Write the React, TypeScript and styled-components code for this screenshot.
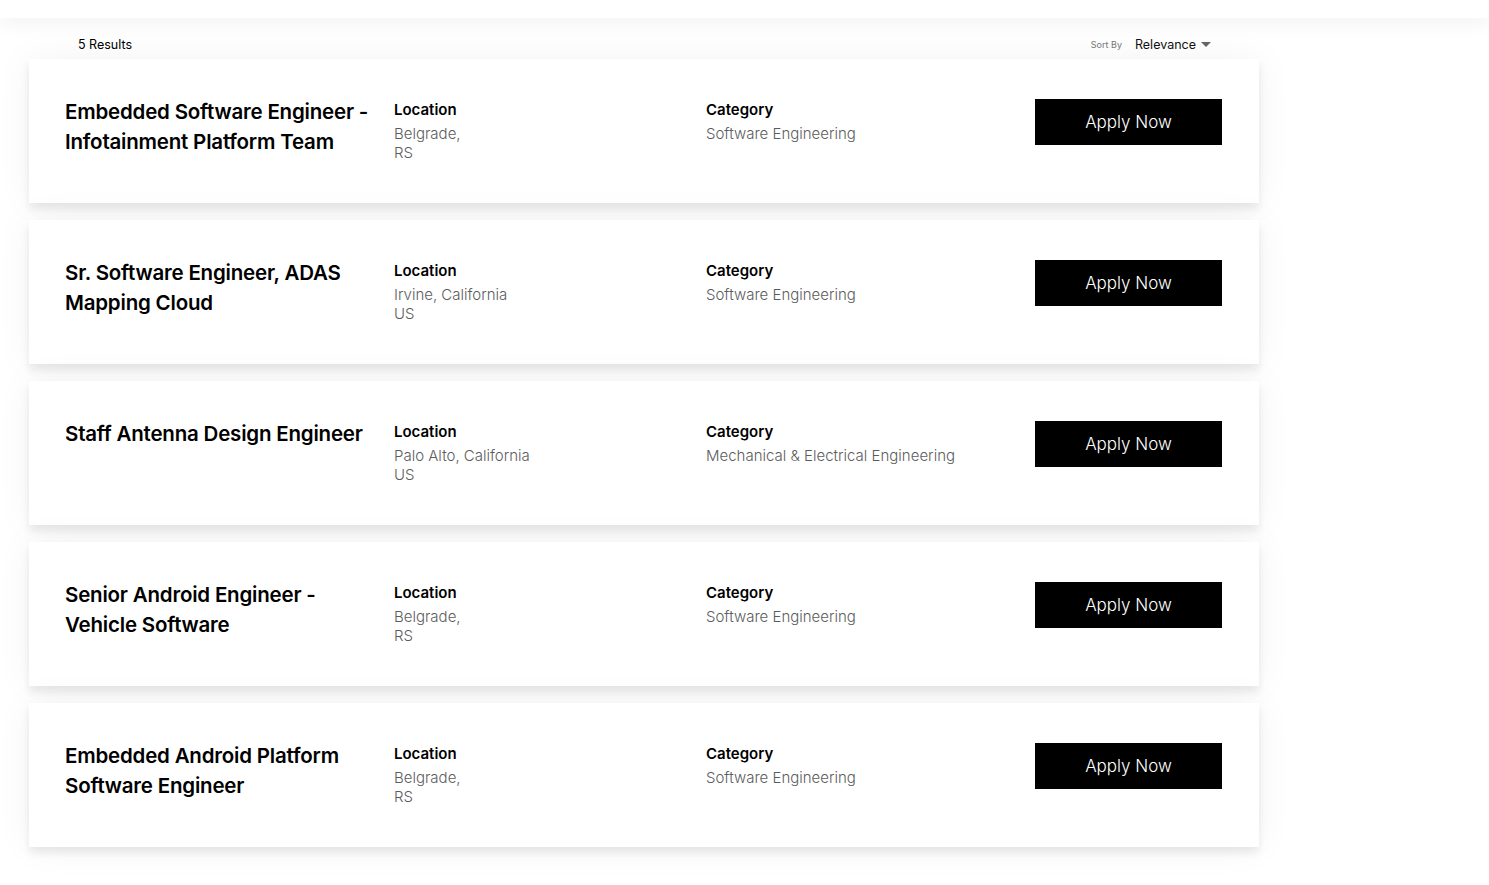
import React from 'react';
import styled, { createGlobalStyle } from 'styled-components';

const GlobalStyle = createGlobalStyle`
  body {
    margin: 0;
    background: #fff;
    font-family: Inter, "Liberation Sans", sans-serif;
    color: #000;
  }
`;

const TopBar = styled.div`
  position: relative;
  z-index: 2;
  height: 18px;
  background: #fff;
  box-shadow: 0 6px 18px rgba(0, 0, 0, 0.05);
`;

const Page = styled.main`
  width: 1230px;
  margin-left: 29px;
  padding-bottom: 40px;
`;

const ResultsBar = styled.div`
  display: flex;
  align-items: center;
  justify-content: space-between;
  height: 41px;
  padding: 11px 48px 0 49px;
  box-sizing: border-box;
  font-size: 12.5px;
`;

const SortBox = styled.div`
  display: flex;
  align-items: center;
  gap: 13px;
`;

const SortLabel = styled.span`
  font-size: 9px;
  color: #777;
`;

const SortValue = styled.span`
  display: flex;
  align-items: center;
  gap: 5px;
  font-size: 12.5px;
  color: #111;
`;

const Caret = styled.span`
  width: 0;
  height: 0;
  border-left: 5px solid transparent;
  border-right: 5px solid transparent;
  border-top: 5px solid #666;
`;

const List = styled.div`
  display: flex;
  flex-direction: column;
  gap: 17px;
`;

const Card = styled.article`
  display: grid;
  grid-template-columns: 329px 312px 1fr 187px;
  align-items: start;
  height: 144px;
  box-sizing: border-box;
  padding: 40px 37px 0 36px;
  background: #fff;
  box-shadow: 0 6px 8px rgba(0, 0, 0, 0.08), 0 0 36px rgba(0, 0, 0, 0.05);
`;

const Title = styled.h2`
  margin: -2px 0 0;
  max-width: 310px;
  font-size: 20.5px;
  font-weight: 600;
  line-height: 30px;
  letter-spacing: -0.2px;
`;

const Field = styled.div`
  display: flex;
  flex-direction: column;
  padding-top: 1px;
`;

const FieldLabel = styled.span`
  font-size: 15px;
  font-weight: 600;
  line-height: 20px;
  margin-bottom: 4px;
`;

const FieldValue = styled.span`
  font-size: 15px;
  font-weight: 300;
  line-height: 19px;
  color: #5c5c5c;
`;

const ApplyButton = styled.button`
  width: 187px;
  height: 46px;
  border: none;
  background: #000;
  color: #fff;
  font-family: inherit;
  font-size: 17px;
  font-weight: 300;
  cursor: pointer;
`;

const jobs = [
  { title: 'Embedded Software Engineer - Infotainment Platform Team', loc: ['Belgrade,', 'RS'], cat: 'Software Engineering' },
  { title: 'Sr. Software Engineer, ADAS Mapping Cloud', loc: ['Irvine, California', 'US'], cat: 'Software Engineering' },
  { title: 'Staff Antenna Design Engineer', loc: ['Palo Alto, California', 'US'], cat: 'Mechanical & Electrical Engineering' },
  { title: 'Senior Android Engineer - Vehicle Software', loc: ['Belgrade,', 'RS'], cat: 'Software Engineering' },
  { title: 'Embedded Android Platform Software Engineer', loc: ['Belgrade,', 'RS'], cat: 'Software Engineering' },
];

const App = () => {
  return (
    <>
      <GlobalStyle />
      <TopBar />
      <Page>
        <ResultsBar>
          <span>5 Results</span>
          <SortBox>
            <SortLabel>Sort By</SortLabel>
            <SortValue>
              Relevance <Caret />
            </SortValue>
          </SortBox>
        </ResultsBar>
        <List>
          {jobs.map((job) => (
            <Card key={job.title}>
              <Title>{job.title}</Title>
              <Field>
                <FieldLabel>Location</FieldLabel>
                {job.loc.map((l) => (
                  <FieldValue key={l}>{l}</FieldValue>
                ))}
              </Field>
              <Field>
                <FieldLabel>Category</FieldLabel>
                <FieldValue>{job.cat}</FieldValue>
              </Field>
              <ApplyButton>Apply Now</ApplyButton>
            </Card>
          ))}
        </List>
      </Page>
    </>
  );
};

export default App;
